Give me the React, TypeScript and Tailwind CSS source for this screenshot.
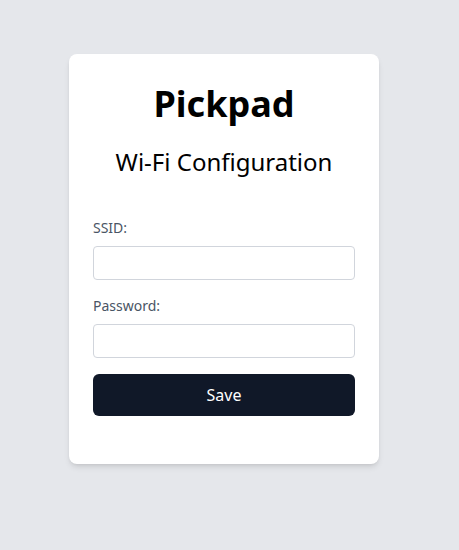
export default function App() {
  return (
    <div className="min-h-[550px] bg-gray-200 pl-[69px] pt-[54px] font-['Noto_Sans',sans-serif]">
      <div className="w-[310px] rounded-lg bg-white p-6 pb-12 shadow-md">
        <h1 className="pt-1.5 text-center text-4xl leading-10 font-bold text-black">Pickpad</h1>
        <h2 className="mt-[22px] text-center text-2xl text-black">Wi-Fi Configuration</h2>
        <form className="mt-10 flex flex-col" onSubmit={(e) => e.preventDefault()}>
          <label className="text-sm text-gray-600">SSID:</label>
          <input type="text" className="mt-2 h-[34px] rounded border border-gray-300 px-2" />
          <label className="mt-4 text-sm text-gray-600">Password:</label>
          <input type="password" className="mt-2 h-[34px] rounded border border-gray-300 px-2" />
          <button className="mt-4 h-[42px] rounded-md bg-gray-900 text-white">Save</button>
        </form>
      </div>
    </div>
  );
}
